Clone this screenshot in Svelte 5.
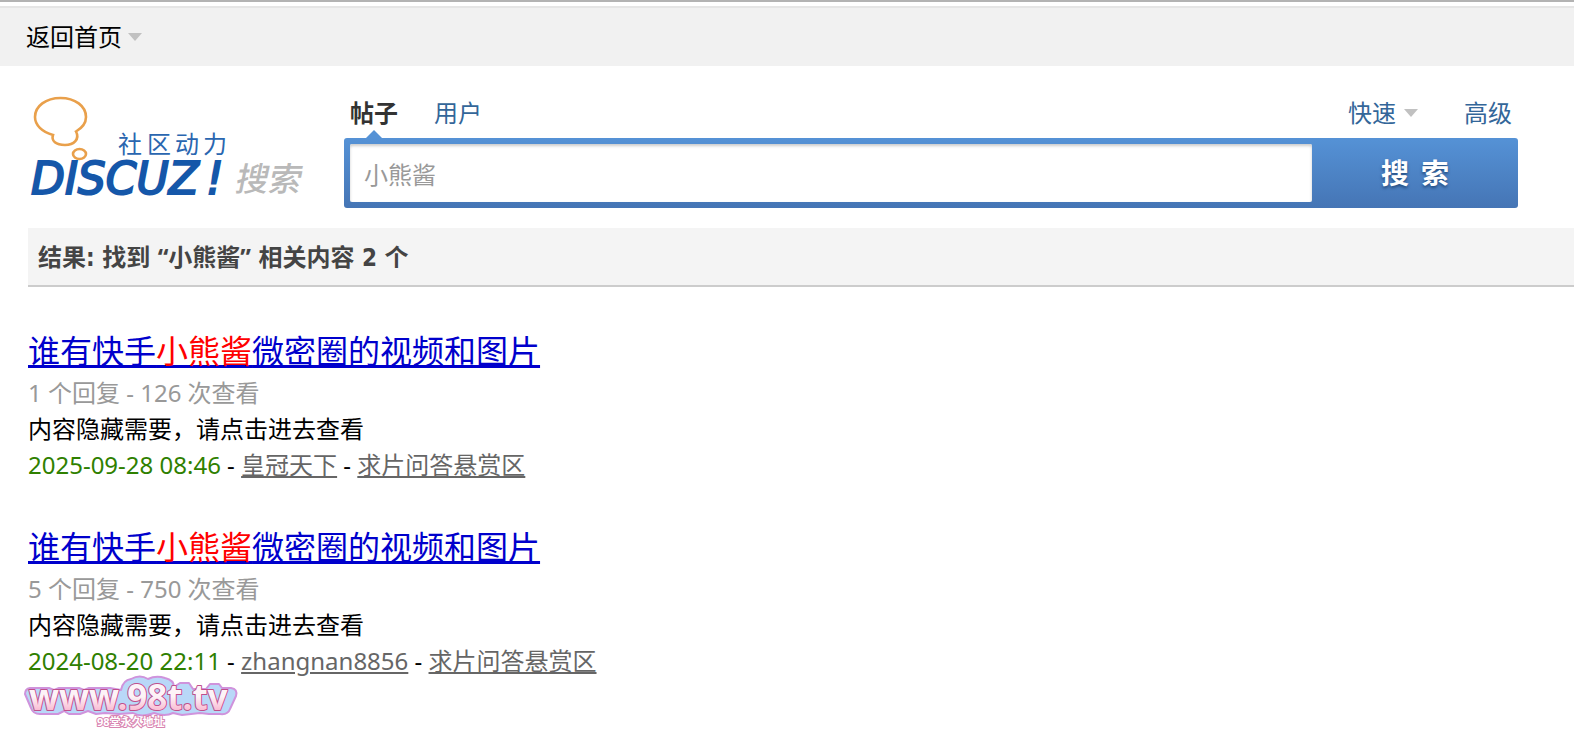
<script>
  const keyword = '小熊酱';
  const results = [
    { replies: 1, views: 126, date: '2025-09-28 08:46', author: '皇冠天下' },
    { replies: 5, views: 750, date: '2024-08-20 22:11', author: 'zhangnan8856' }
  ];
  let query = $state(keyword);
</script>

<div class="topline"></div>
<nav class="topbar">
  <button class="menu" type="button">返回首页<span class="caret"></span></button>
</nav>

<header class="head">
  <a class="logo" href="#home" aria-label="Discuz! 社区动力 搜索">
    <svg viewBox="0 0 280 110" width="280" height="110">
      <g fill="none" stroke="#e9a04b" stroke-width="2.6">
        <path d="M23 43 C12 40 5 33 5 25 C5 14 16 6 30.500 6 C45 6 56 14 56 25 C56 31 52 36 46 39.500 C50 47 44 53 35 53 C26 53 21 49 23 43 Z" />
        <ellipse cx="49.5" cy="62" rx="6.5" ry="5" />
      </g>
      <text class="slogan" x="88 117 145 173" y="61">社区动力</text>
      <text class="brand" x="1" y="102">DISCUZ<tspan x="176">!</tspan></text>
      <text class="kind" transform="translate(204 99) skewX(-12)">搜索</text>
    </svg>
  </a>

  <form class="search" onsubmit={(e) => e.preventDefault()}>
    <div class="tabs">
      <a class="current" href="#threads">帖子</a>
      <a href="#users">用户</a>
      <span class="space"></span>
      <button class="menu quick" type="button">快速<span class="caret"></span></button>
      <a href="#advanced">高级</a>
    </div>
    <div class="box">
      <input type="text" aria-label="搜索内容" bind:value={query} />
      <button class="submit" type="submit"><span>搜</span><span>索</span></button>
    </div>
  </form>
</header>

<main>
  <h2>结果: 找到 <span class="quoted">“{keyword}”</span> 相关内容 {results.length} 个</h2>
  <ul>
    {#each results as r}
      <li>
        <h3><a href="#thread">谁有快手<em>{keyword}</em>微密圈的视频和图片</a></h3>
        <p class="meta">{r.replies} 个回复 - {r.views} 次查看</p>
        <p>内容隐藏需要，请点击进去查看</p>
        <p class="from"><time>{r.date}</time> - <a href="#author">{r.author}</a> - <a href="#forum">求片问答悬赏区</a></p>
      </li>
    {/each}
  </ul>
  <svg class="mark" viewBox="0 0 220 56" width="220" height="56">
    <defs>
      <linearGradient id="pink" x1="0" y1="0" x2="0" y2="1">
        <stop offset="0.5" stop-color="#fdf3f7" />
        <stop offset="0.85" stop-color="#f8b0cc" />
      </linearGradient>
    </defs>
    <path
      d="M8 13 L27 13 L32 15 L37 13 L57 13 L62 15 L67 13 L88 13 L99 15 Q101 5 109 4 Q118 -1 126 4 Q134 0 143 3 Q152 5 152 12 L158 8 L167 8 L171 14 L184 14 L188 9 L197 9 L200 13 L209 13 Q216 14 214 21 L208 34 Q206 40 198 39 L187 39 L178 38 L160 40 L151 38 Q143 42 132 38 Q120 43 111 38 L97 39 L83 38 L74 39 L66 36 L58 39 L47 39 L42 36 L36 39 L18 39 Q11 39 9 33 L3 19 Q3 14 8 13 Z"
      fill="#b9d8f8"
      stroke="#cf93dc"
      stroke-width="2"
      stroke-linejoin="round"
    />
    <text class="site" x="7" y="35">www.98t.tv</text>
    <text class="note" x="75" y="51">98堂永久地址</text>
  </svg>
</main>

<style>
  :global(body) {
    margin: 0;
    background: #fff;
    color: #000;
    font: 24px/36px 'Noto Sans', 'Noto Sans CJK SC', sans-serif;
  }
  a {
    color: #369;
    text-decoration: none;
  }
  button,
  input {
    font: inherit;
    border: 0;
    padding: 0;
    margin: 0;
  }
  .topline {
    height: 4px;
    border-top: 2px solid #b3b3b3;
  }
  .topbar {
    display: flex;
    align-items: center;
    height: 58px;
    padding: 0 26px;
    border-top: 2px solid #e5e5e5;
    background: #f1f1f1;
  }
  .menu {
    display: flex;
    align-items: center;
    gap: 6px;
    background: none;
    color: inherit;
    cursor: pointer;
  }
  .caret {
    border: 7px solid transparent;
    border-top: 8px solid #c1c1c1;
    border-bottom: 0;
  }
  .head {
    display: flex;
    padding: 26px 56px 20px 30px;
  }
  .logo {
    flex: none;
    width: 314px;
  }
  .logo svg,
  .mark {
    display: block;
    overflow: visible;
  }
  .slogan {
    font-size: 24px;
    font-weight: 400;
    fill: #2a66b0;
  }
  .brand {
    font: italic 400 44px 'DejaVu Sans', sans-serif;
    fill: #1557a9;
    stroke: #1557a9;
    stroke-width: 2px;
  }
  .kind {
    font-size: 33px;
    font-weight: 500;
    fill: #b9b9b9;
  }
  .search {
    flex: 1;
    min-width: 0;
  }
  .tabs {
    display: flex;
    align-items: center;
    gap: 36px;
    height: 42px;
    padding: 0 6px 4px;
  }
  .tabs > * {
    line-height: 42px;
  }
  .space {
    flex: 1;
  }
  .current {
    position: relative;
    color: #333;
    font-weight: 700;
  }
  .current::after {
    content: '';
    position: absolute;
    left: 16px;
    bottom: -4px;
    border: 8px solid transparent;
    border-top: 0;
    border-bottom-color: #5592d6;
  }
  .quick {
    gap: 8px;
    margin-right: 10px;
    color: #369;
  }
  .box {
    display: flex;
    padding: 6px 0 6px 6px;
    border-radius: 3px;
    background: linear-gradient(#5592d6, #4575b5);
  }
  .box input {
    flex: 1;
    min-width: 0;
    height: 58px;
    padding: 0 14px;
    box-sizing: border-box;
    border-radius: 2px;
    background: #fff;
    box-shadow: inset 0 2px 3px #ccc;
    color: #999;
    outline: 0;
  }
  .submit {
    display: flex;
    align-items: center;
    justify-content: center;
    gap: 12px;
    width: 206px;
    background: none;
    color: #fff;
    font-size: 28px;
    font-weight: 700;
    text-shadow: 0 2px 3px #234b7d;
    cursor: pointer;
  }
  main {
    padding-left: 28px;
  }
  h2 {
    margin: 0;
    padding: 2px 10px 0;
    border-bottom: 2px solid #ccc;
    background: #f4f4f4;
    color: #444;
    font-family: 'DejaVu Sans Condensed', 'Noto Sans CJK SC', sans-serif;
    font-size: 24px;
    line-height: 54px;
  }
  .quoted {
    font-family: 'Noto Sans', 'Noto Sans CJK SC', sans-serif;
  }
  ul {
    display: grid;
    gap: 42px;
    margin: 0;
    padding: 42px 0 0;
    list-style: none;
  }
  h3 {
    margin: 0 0 2px;
    font-size: 32px;
    font-weight: 400;
    line-height: 44px;
  }
  h3 a {
    color: #00c;
    text-decoration: underline;
  }
  em {
    color: #f00;
    font-style: normal;
  }
  p {
    margin: 0;
  }
  .meta {
    color: #999;
  }
  time {
    color: #2f8000;
  }
  .from a {
    color: #666;
    text-decoration: underline;
  }
  .mark {
    margin: -4px 0 0 -6px;
  }
  .site {
    font: 700 35px 'Noto Sans', sans-serif;
    fill: url(#pink);
    stroke: #c04f8c;
    stroke-width: 2px;
    stroke-linejoin: round;
    paint-order: stroke;
  }
  .note {
    font-size: 11px;
    font-weight: 700;
    fill: #fff;
    stroke: #d883b0;
    stroke-width: 2px;
    paint-order: stroke;
  }
</style>
